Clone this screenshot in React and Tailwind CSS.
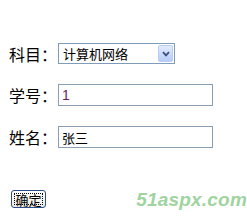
import React from 'react';

const cjk = { fontFamily: '"Noto Sans CJK SC", "Noto Sans", sans-serif' };

const Label = ({ children }) => (
    <span className="w-[49px] text-[16px] leading-none text-black" style={cjk}>{children}</span>
);

const App = () => {
    return (
        <div className="w-[247px] h-[222px] bg-white pl-[9px] overflow-hidden" style={cjk}>
            {/* subject */}
            <div className="flex items-center h-[21px] mt-[43px]">
                <Label>科目：</Label>
                <div className="flex items-center w-[117px] h-[21px] border border-[#7f9db9] bg-white pl-[4px] pr-[1px]">
                    <span className="flex-1 text-[13px] leading-none text-black">计算机网络</span>
                    <div className="w-[15px] h-[17px] rounded-[2px] border border-[#b9cdf4] bg-gradient-to-b from-[#e3ebfd] to-[#b7ccf7] flex items-center justify-center">
                        <svg width="8" height="6" viewBox="0 0 8 6">
                            <path d="M1 1.2 L4 4.4 L7 1.2" fill="none" stroke="#3c4f78" strokeWidth="1.8" />
                        </svg>
                    </div>
                </div>
            </div>

            {/* student no */}
            <div className="flex items-center h-[22px] mt-[20px]">
                <Label>学号：</Label>
                <div className="w-[155px] h-[22px] border border-[#8a9eb0] bg-white flex items-center pl-[3px]">
                    <span className="text-[14px] leading-none text-[#6b1f5f]" style={{ fontFamily: '"Liberation Sans", sans-serif' }}>1</span>
                </div>
            </div>

            {/* name */}
            <div className="flex items-center h-[22px] mt-[20px]">
                <Label>姓名：</Label>
                <div className="w-[155px] h-[22px] border border-[#8a9eb0] bg-white flex items-center pl-[3px]">
                    <span className="text-[13px] leading-none text-black">张三</span>
                </div>
            </div>

            {/* submit + watermark */}
            <div className="flex items-center mt-[42px] h-[18px]">
                <div className="ml-[2px] w-[36px] h-[18px] rounded-[3px] border border-[#2c4c8c] bg-gradient-to-b from-white to-[#eceae0] p-[2px]">
                    <div className="w-full h-full border border-dotted border-black flex items-center justify-center">
                        <span className="text-[13px] leading-none text-black">确定</span>
                    </div>
                </div>
                <span
                    className="ml-[90px] text-[19px] leading-none font-bold italic text-[#9fd49f] tracking-[0.2px]"
                    style={{ fontFamily: '"Liberation Sans", Arial, sans-serif' }}
                >
                    51aspx.com
                </span>
            </div>
        </div>
    );
};

export default App;
